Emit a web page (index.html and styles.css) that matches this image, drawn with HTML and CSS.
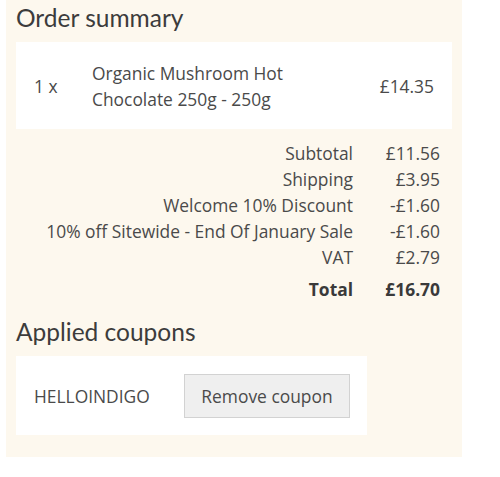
FILE: index.html
```html
<!DOCTYPE html>
<html>
<head>
<meta charset="utf-8">
<link rel="stylesheet" href="styles.css">
</head>
<body>
<div class="panel">
  <h2 class="title">Order summary</h2>
  <div class="item">
    <div class="qty">1 x</div>
    <div class="name">Organic Mushroom Hot<br>Chocolate 250g - 250g</div>
    <div class="price">£14.35</div>
  </div>
  <div class="totals">
    <div class="label">Subtotal</div><div class="value">£11.56</div>
    <div class="label">Shipping</div><div class="value">£3.95</div>
    <div class="label">Welcome 10% Discount</div><div class="value">-£1.60</div>
    <div class="label">10% off Sitewide - End Of January Sale</div><div class="value">-£1.60</div>
    <div class="label">VAT</div><div class="value">£2.79</div>
    <div class="label total">Total</div><div class="value total">£16.70</div>
  </div>
  <h2 class="title coupons-title">Applied coupons</h2>
  <div class="coupon">
    <div class="code">HELLOINDIGO</div>
    <button class="remove">Remove coupon</button>
  </div>
</div>
</body>
</html>
```
FILE: styles.css
```css
html, body {
  margin: 0;
  padding: 0;
  background: #fff;
}
body {
  font-family: "Open Sans", sans-serif;
  font-size: 17.4px;
  color: #4a4a4a;
}
.panel {
  margin-left: 6px;
  width: 436px;
  padding: 1px 10px 22px 10px;
  background: #fdf8ee;
}
.title {
  margin: 0;
  font-family: Lato, sans-serif;
  font-weight: 400;
  font-size: 24.5px;
  line-height: 34px;
  color: #3c3c3c;
}
.item {
  margin-top: 7px;
  background: #fff;
  display: flex;
  align-items: center;
  padding: 18px 18px 17px 18px;
  line-height: 26px;
}
.qty {
  width: 58px;
}
.name {
  flex: 1;
}
.price {
  text-align: right;
}
.totals {
  margin-top: 11px;
  display: grid;
  grid-template-columns: 1fr 56px;
  column-gap: 31px;
  padding-right: 12px;
  line-height: 26px;
}
.label, .value {
  text-align: right;
}
.total {
  font-weight: 700;
  padding-top: 6px;
  color: #3a3a3a;
}
.coupons-title {
  margin-top: 13px;
}
.coupon {
  margin-top: 7px;
  width: 316px;
  background: #fff;
  display: flex;
  align-items: center;
  padding: 18px 17px 17px 18px;
}
.code {
  width: 150px;
}
.remove {
  font-family: "Open Sans", sans-serif;
  font-size: 17.4px;
  color: #4a4a4a;
  background: #efefef;
  border: 1px solid #d2d2d2;
  height: 44px;
  width: 166px;
  padding: 0;
}
```
